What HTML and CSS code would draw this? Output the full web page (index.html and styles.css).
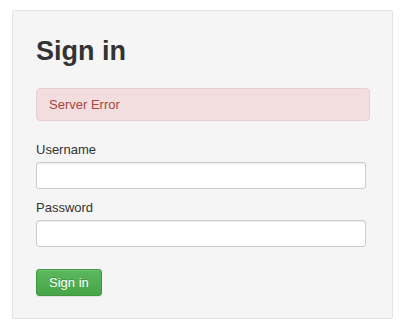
FILE: index.html
```html
<!DOCTYPE html>
<html lang="en">

<head>
    <meta charset="UTF-8">
    <title>Sign in</title>
    <link rel="stylesheet" href="styles.css">
</head>

<body>
    <div class="well">
        <h2 class="title">Sign in</h2>
        <div class="alert">Server Error</div>
        <form class="signin-form">
            <div class="row">
                <label for="username">Username</label>
                <input type="text" id="username" name="username">
            </div>
            <div class="row">
                <label for="password">Password</label>
                <input type="password" id="password" name="password">
            </div>
            <button type="submit" class="btn">Sign in</button>
        </form>
    </div>
</body>

</html>
```

FILE: styles.css
```css
body {
    margin: 0;
    font-family: "Liberation Sans", Arial, sans-serif;
    font-size: 13px;
    color: #333;
    background: #fff;
}

.well {
    margin: 10px 7px 0 12px;
    padding: 23px 22px 22px 23px;
    background: #f5f5f5;
    border: 1px solid #e3e3e3;
    border-radius: 2px;
}

.title {
    margin: 0 0 20px;
    font-size: 27px;
    line-height: 34px;
    font-weight: bold;
    color: #333;
}

.alert {
    padding: 6px 12px 6px;
    line-height: 19px;
    color: #a94442;
    background: #f2dede;
    border: 1px solid #ebccd1;
    border-radius: 4px;
    margin-bottom: 20px;
}

.row {
    margin-bottom: 10px;
}

label {
    display: block;
    line-height: 18px;
    margin-bottom: 3px;
}

input {
    display: block;
    box-sizing: border-box;
    width: 330px;
    height: 27px;
    padding: 3px 8px;
    font-family: inherit;
    font-size: 13px;
    background: #fff;
    border: 1px solid #ccc;
    border-radius: 3px;
    box-shadow: inset 0 1px 1px rgba(0, 0, 0, 0.075);
}

.btn {
    margin-top: 12px;
    height: 27px;
    padding: 0 12px;
    font-family: inherit;
    font-size: 13px;
    color: #fff;
    background: linear-gradient(to bottom, #5cb85c 0%, #47a447 100%);
    border: 1px solid #419641;
    border-radius: 3px;
    box-shadow: inset 0 1px 0 rgba(255, 255, 255, 0.15), 0 1px 1px rgba(0, 0, 0, 0.075);
    text-shadow: 0 -1px 0 rgba(0, 0, 0, 0.2);
}
```
